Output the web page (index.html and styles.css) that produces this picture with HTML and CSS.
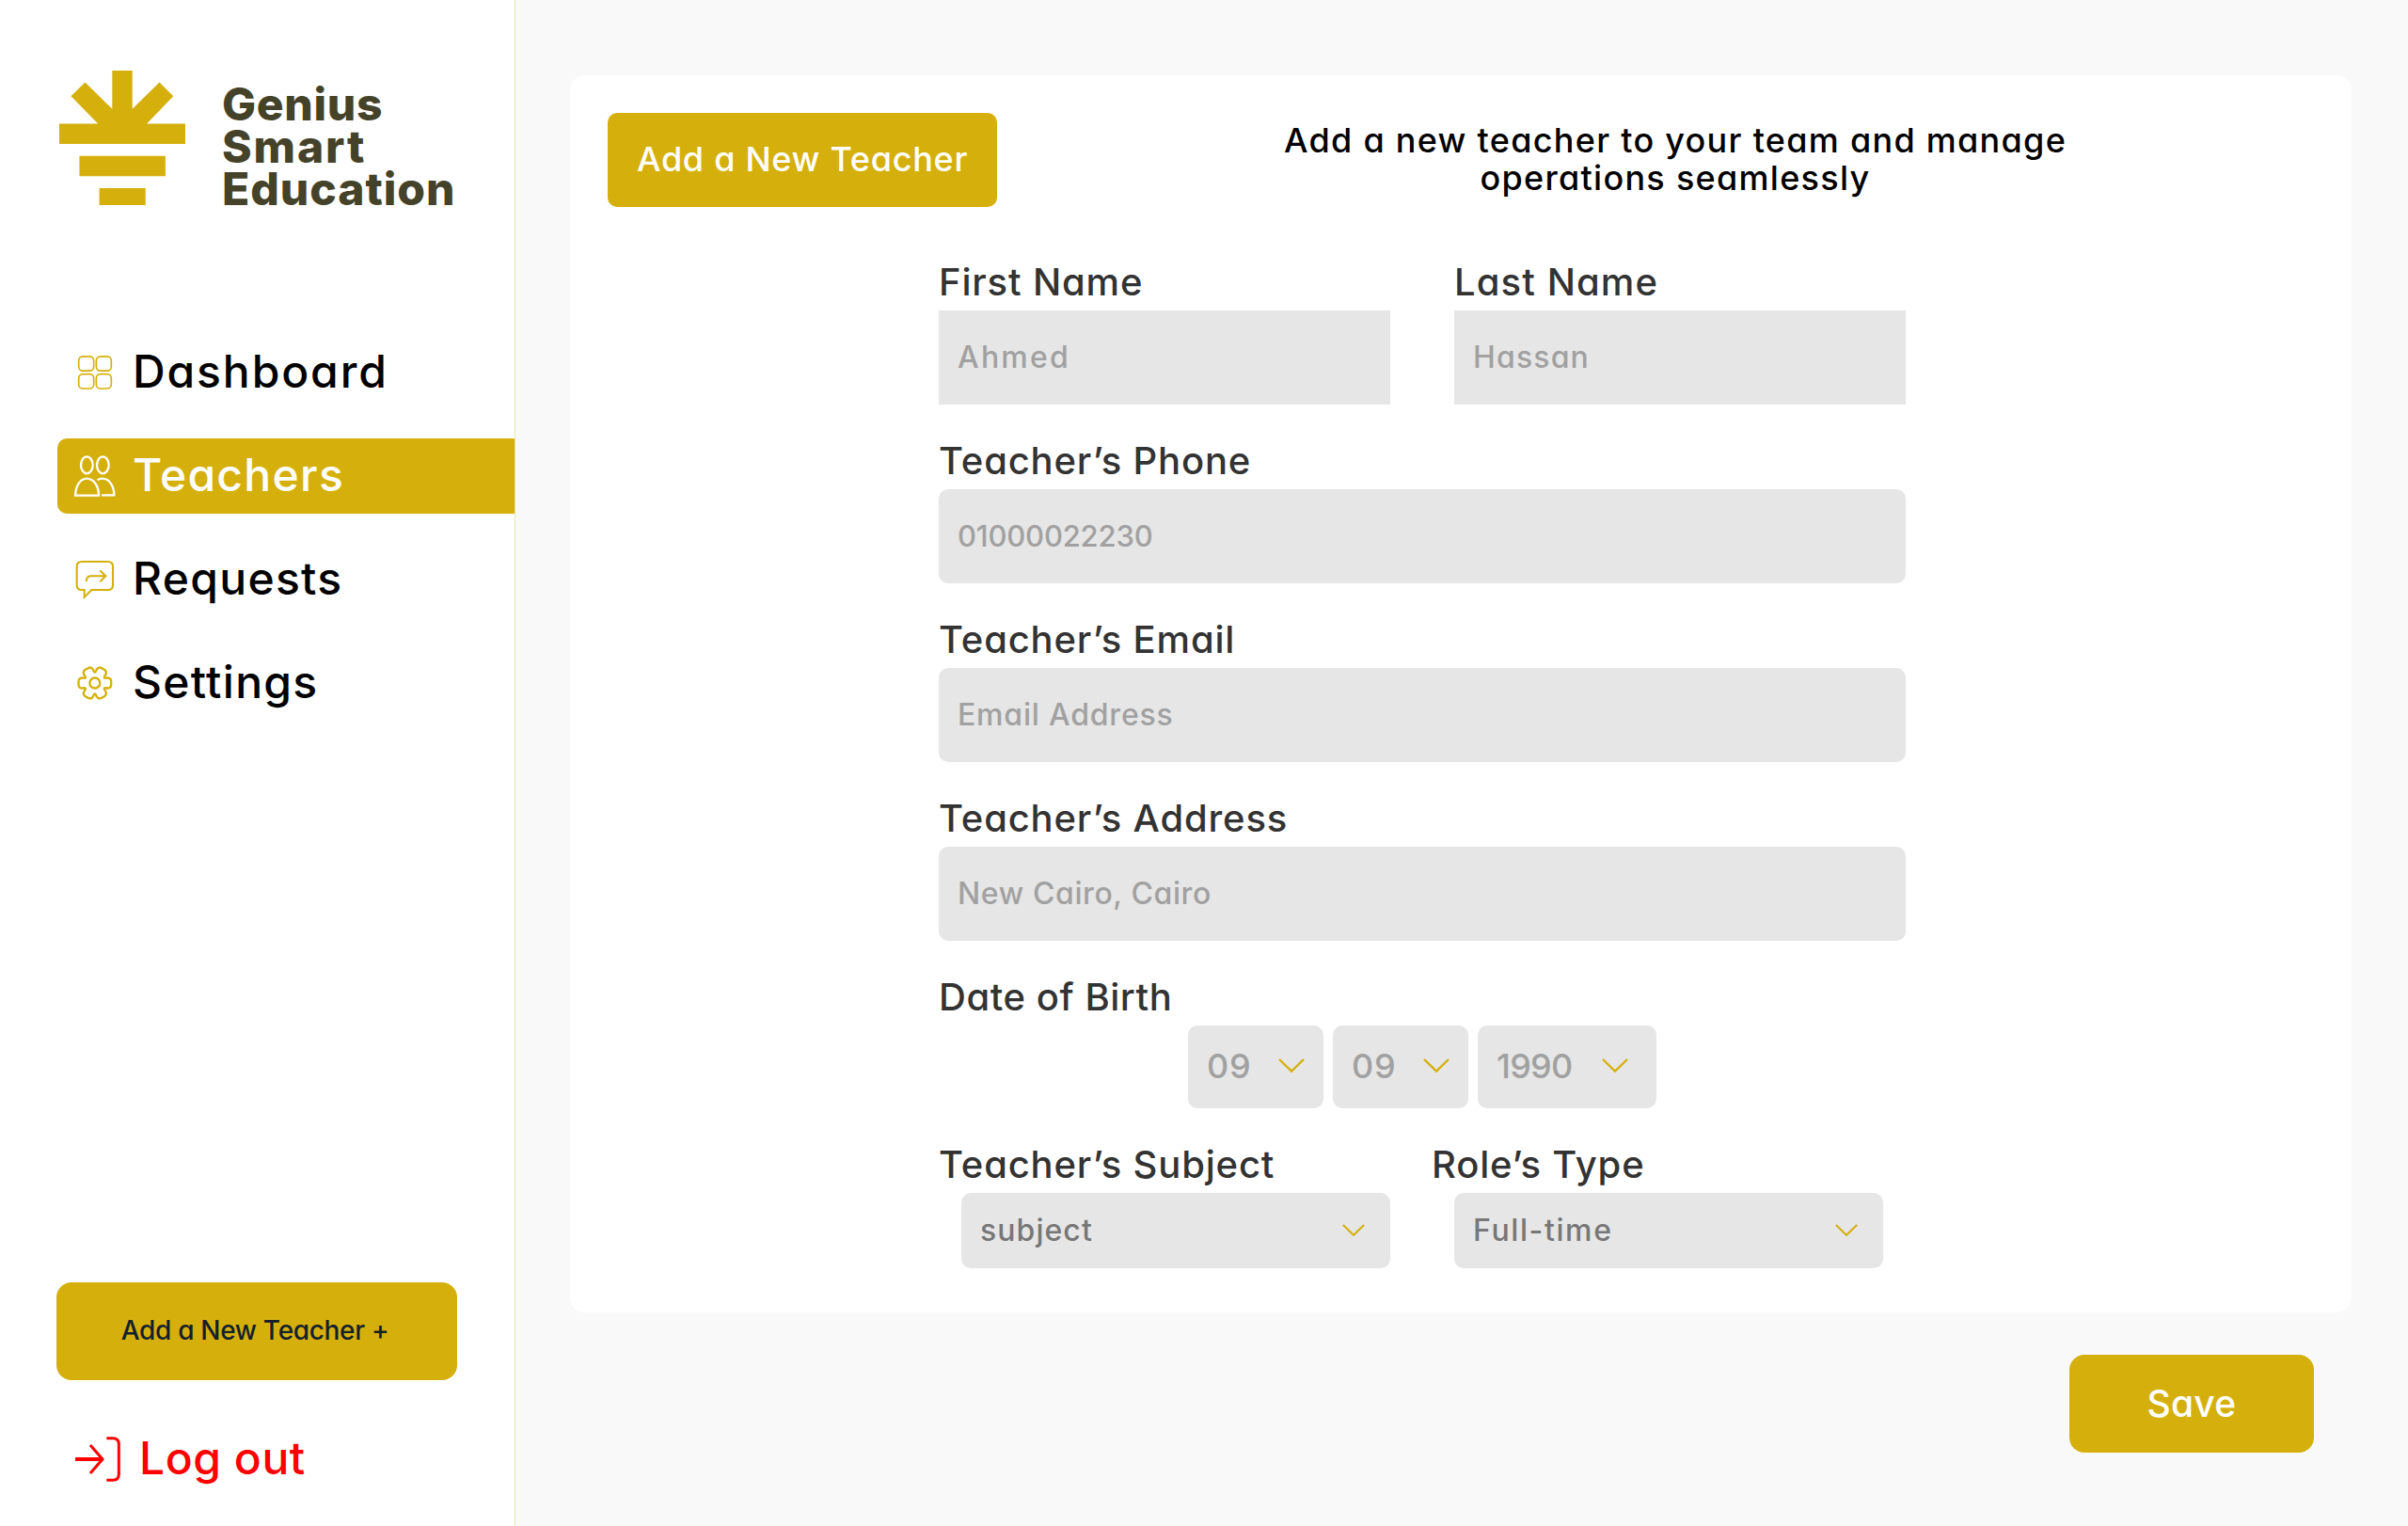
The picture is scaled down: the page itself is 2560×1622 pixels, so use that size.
FILE: index.html
```html
<!DOCTYPE html>
<html lang="en">
<head>
<meta charset="utf-8">
<title>Genius Smart Education</title>
<link rel="stylesheet" href="styles.css">
</head>
<body>
<div class="app">
  <aside class="sidebar">
    <div class="brand">
      <svg class="brand-mark" viewBox="70 75 400 427" fill="#d5b00d">
        <path d="M238 75H302V197L388 112L432 156L348 244H470V308H70V244H193L107 156L152 112L238 197Z"/>
        <path d="M134 346H407V410H134ZM197 448H344V502H197Z"/>
      </svg>
      <div class="brand-name"><span class="brand-genius">Genius</span><span class="brand-smart">Smart</span><span class="brand-education">Education</span></div>
    </div>
    <nav class="nav">
      <a class="nav-item nav-dashboard">
        <svg viewBox="117 72 132 132" fill="none" stroke="#d5b00d" stroke-width="5">
          <rect x="131" y="86.500" width="48" height="46" rx="13"/><rect x="187" y="86.500" width="48" height="46" rx="13"/>
          <rect x="131" y="143" width="48" height="46" rx="13"/><rect x="187" y="143" width="48" height="46" rx="13"/>
        </svg>
        <span>Dashboard</span>
      </a>
      <a class="nav-item active">
        <svg viewBox="117 402 132 132" fill="none" stroke="#fff" stroke-width="7">
          <ellipse cx="157" cy="433" rx="19" ry="27"/><ellipse cx="208" cy="433" rx="19" ry="27"/>
          <path d="M120.500 530C120.500 499 136 476 157 476S195 499 195 530Z"/>
          <path d="M191 481C196 477 201 476 207 476C228 476 244 499 244 530M247 529H204"/>
        </svg>
        <span>Teachers</span>
      </a>
      <a class="nav-item">
        <svg viewBox="117 72 132 132" fill="none" stroke="#d5b00d" stroke-width="6.200">
          <path d="M141 81H224Q240 81 240 97V155Q240 171 224 171H172L149 194V171H141Q125 171 125 155V97Q125 81 141 81Z"/>
          <path d="M155.500 145V141Q157 127 170 127H216M199 109L217 127L199 145"/>
        </svg>
        <span>Requests</span>
      </a>
      <a class="nav-item">
        <svg viewBox="117 402 132 132" fill="none" stroke="#d5b00d" stroke-width="7" stroke-linecap="round">
          <defs><path id="tooth" d="M30.300-17.500C32.500-14 36-16.500 40-16.500C47-16 52-11 52-5V5C52 11 47 16 40 16.500C36 16.500 32.500 14 30.300 17.500"/></defs>
          <g transform="translate(182.500 468)">
            <use href="#tooth"/><use href="#tooth" transform="rotate(60)"/><use href="#tooth" transform="rotate(120)"/>
            <use href="#tooth" transform="rotate(180)"/><use href="#tooth" transform="rotate(240)"/><use href="#tooth" transform="rotate(300)"/>
            <circle r="16.500"/>
          </g>
        </svg>
        <span>Settings</span>
      </a>
    </nav>
    <button class="btn add"><span>Add a New Teacher +</span></button>
    <a class="logout">
      <svg viewBox="120 561 144 144" fill="none" stroke="#f00" stroke-width="9">
        <path d="M120 633H206" stroke-width="12"/><path d="M168 588L207 633L168 678"/>
        <path d="M220 566H240Q259 566 259 585V681Q259 700 240 700H220"/>
      </svg>
      <span>Log out</span>
    </a>
  </aside>
  <main class="main">
    <section class="card">
      <header class="card-head">
        <button class="btn title"><span>Add a New Teacher</span></button>
        <p class="subtitle"><span>Add a new teacher to your team and manage</span> <span>operations seamlessly</span></p>
      </header>
      <form class="form">
        <div class="pair names">
          <div class="field"><label>First Name</label><div class="input square first-name"><span>Ahmed</span></div></div>
          <div class="field"><label class="last-label">Last Name</label><div class="input square last-name"><span>Hassan</span></div></div>
        </div>
        <div class="field"><label>Teacher’s Phone</label><div class="input phone"><span>01000022230</span></div></div>
        <div class="field"><label>Teacher’s Email</label><div class="input"><span>Email Address</span></div></div>
        <div class="field"><label>Teacher’s Address</label><div class="input address"><span>New Cairo, Cairo</span></div></div>
        <div class="field"><label class="birth-label">Date of Birth</label>
          <div class="dates">
            <div class="select date"><span>09</span><svg viewBox="0 0 28 16"><path d="M1 1L14 13.500L27 1"/></svg></div>
            <div class="select date"><span>09</span><svg viewBox="0 0 28 16"><path d="M1 1L14 13.500L27 1"/></svg></div>
            <div class="select date year"><span>1990</span><svg viewBox="0 0 28 16"><path d="M1 1L14 13.500L27 1"/></svg></div>
          </div>
        </div>
        <div class="pair roles">
          <div class="field"><label>Teacher’s Subject</label><div class="select"><span>subject</span><svg viewBox="0 0 28 16"><path d="M1 1L14 13.500L27 1"/></svg></div></div>
          <div class="field"><label>Role’s Type</label><div class="select role"><span>Full-time</span><svg viewBox="0 0 28 16"><path d="M1 1L14 13.500L27 1"/></svg></div></div>
        </div>
      </form>
    </section>
    <button class="btn save"><span>Save</span></button>
  </main>
</div>
</body>
</html>
```
FILE: styles.css
```css
* { box-sizing: border-box; }
body {
  margin: 0;
  font-family: "Inter", "Liberation Sans", sans-serif;
  font-weight: 500;
  font-feature-settings: "cv11";
  color: #000;
}
.app { display: flex; width: 2560px; height: 1622px; background: #f9f9f9; overflow: hidden; }
span { white-space: nowrap; }

.sidebar {
  width: 548px;
  height: 1622px;
  padding: 75px 0 47px 60px;
  display: flex;
  flex-direction: column;
  background: #fff;
  border-right: 1px solid #efe2a8;
}
.brand { display: flex; height: 143px; padding-left: 3px; gap: 39px; }
.brand-mark { width: 134px; height: 143px; }
.brand-name {
  display: flex;
  flex-direction: column;
  align-items: flex-start;
  padding-top: 13px;
  font-size: 48px;
  line-height: 45px;
  font-weight: 800;
  font-feature-settings: normal;
  color: #45422a;
}
.brand-name span { height: 45px; }
.brand-genius { letter-spacing: 0.7px; }
.brand-smart { letter-spacing: 1.85px; }
.brand-education { letter-spacing: 0.95px; }
.nav { display: flex; flex-direction: column; gap: 30px; margin-top: 138px; }
.nav-item {
  display: flex;
  align-items: center;
  height: 80px;
  margin-left: 1px;
  padding-left: 18px;
  gap: 18px;
  border-radius: 10px 0 0 10px;
  font-size: 48px;
  letter-spacing: 1.3px;
}
.nav-dashboard { letter-spacing: 1.9px; }
.nav-item svg { width: 44px; height: 44px; }
.nav-item span { padding-bottom: 3px; }
.nav-item.active { background: #d5b00d; color: #fff; }

.btn {
  display: flex;
  align-items: center;
  justify-content: center;
  border: 0;
  padding: 0 0 2px;
  font: inherit;
  font-feature-settings: inherit;
  background: #d5b00d;
  color: #fff;
}
.add { width: 426px; height: 104px; margin-top: auto; padding-right: 4px; border-radius: 16px; font-size: 28px; letter-spacing: -0.32px; color: #14202a; }
.logout { display: flex; align-items: center; height: 48px; margin-top: 60px; padding-left: 20px; gap: 20px; font-size: 48px; letter-spacing: 0.55px; color: #f00; }
.logout svg { width: 48px; height: 48px; }
.logout span { padding-bottom: 3px; }

.main { flex: 1; display: flex; flex-direction: column; align-items: flex-end; padding: 80px 60px 0 58px; }
.card { width: 1894px; height: 1315px; padding: 40px; border-radius: 16px; background: #fff; }
.card-head { display: flex; height: 100px; }
.title { width: 414px; height: 100px; border-radius: 10px; font-size: 36px; letter-spacing: 0.71px; }
.subtitle {
  display: flex;
  flex-direction: column;
  align-items: center;
  justify-content: center;
  flex: 1;
  margin: 0;
  padding: 0 0 3px 42px;
  font-size: 36px;
  line-height: 40px;
  letter-spacing: 1.28px;
}
.form { display: flex; flex-direction: column; gap: 30px; width: 1028px; margin: 50px 0 0 352px; }
.pair { display: flex; }
.names { gap: 68px; }
.roles { gap: 44px; }
.pair .field { width: 480px; }
.field { display: flex; flex-direction: column; }
label { height: 60px; font-size: 40px; line-height: 59px; letter-spacing: 0.83px; color: #333; }
.last-label { letter-spacing: 1.1px; }
.birth-label { letter-spacing: 0.55px; }
.input {
  display: flex;
  align-items: center;
  height: 100px;
  padding: 0 0 1px 20px;
  border-radius: 10px;
  background: #e6e6e6;
  font-size: 32px;
  letter-spacing: 0.8px;
  color: #a1a1a1;
}
.square { border-radius: 0; }
.first-name { letter-spacing: 2.2px; }
.last-name { letter-spacing: 1.15px; }
.phone { font-size: 31px; letter-spacing: -0.2px; }
.address { letter-spacing: 0.6px; }
.select {
  display: flex;
  align-items: center;
  justify-content: space-between;
  align-self: flex-end;
  width: 456px;
  height: 80px;
  padding: 0 27px 1px 20px;
  border-radius: 10px;
  background: #e6e6e6;
  font-size: 32px;
  letter-spacing: 1.05px;
  color: #777;
}
.role { letter-spacing: 1.6px; }
.select svg { width: 24px; height: 14px; fill: none; stroke: #d5b00d; stroke-width: 2.4; }
.dates { display: flex; justify-content: center; gap: 10px; }
.date { width: 144px; height: 88px; padding: 0 20px 2px; font-size: 36px; letter-spacing: 0.75px; color: #a1a1a1; }
.date svg { width: 28px; height: 16px; }
.year { width: 190px; padding-right: 30px; letter-spacing: -0.76px; }
.save { width: 260px; height: 104px; margin: 45px 40px 0 0; border-radius: 16px; font-size: 39px; letter-spacing: 0.34px; }
```
